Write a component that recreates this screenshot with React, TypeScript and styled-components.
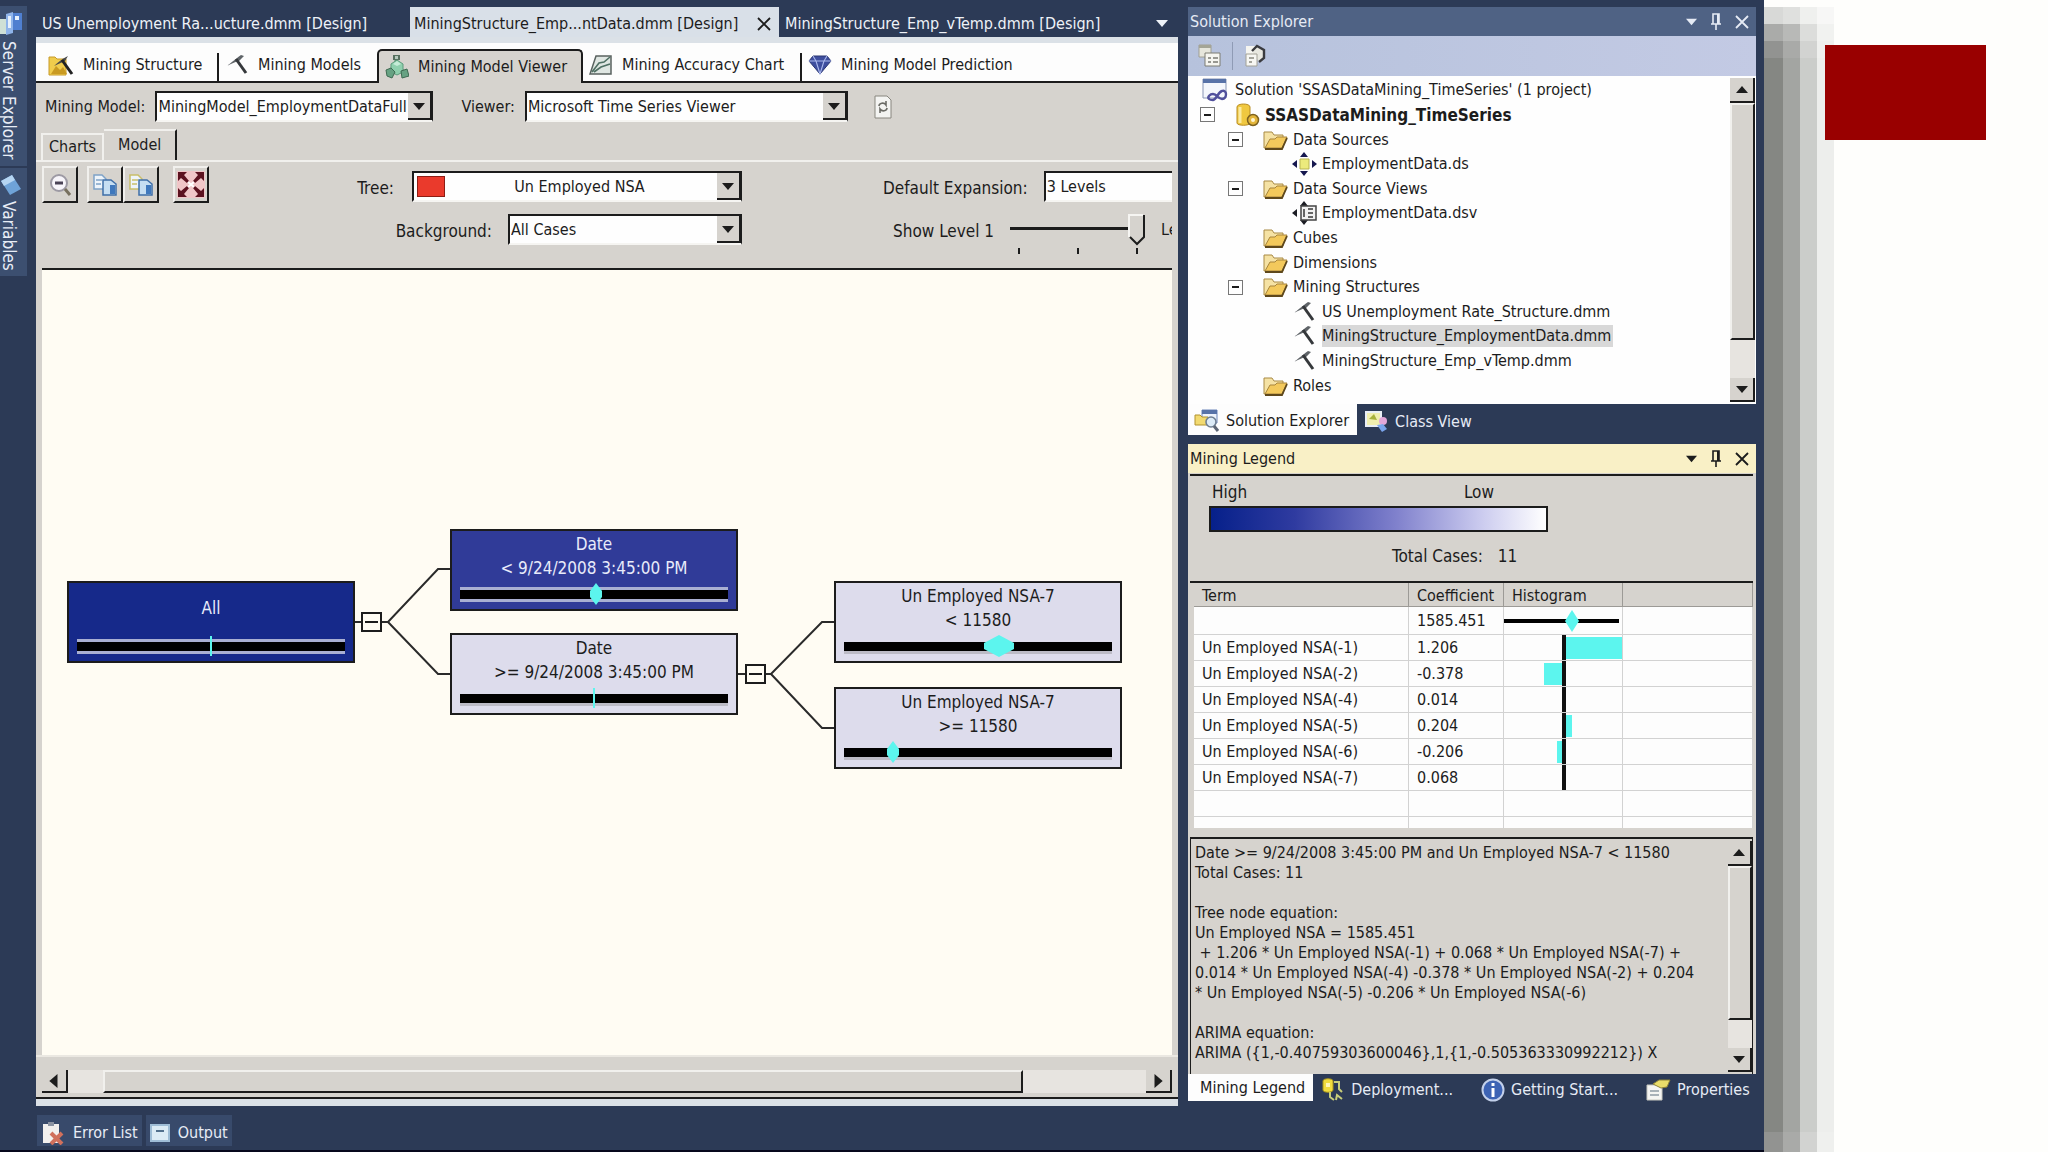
import React from "react";
import styled, { createGlobalStyle, css } from "styled-components";

const navy = "#2c3a56";
const face = "#d6d3ce";
const ink = "#1c1c1c";
const cyan = "#5cf5ee";

const GlobalStyle = createGlobalStyle`
  * { box-sizing: border-box; }
  body {
    margin: 0;
    background: #fefefc;
    color: ${ink};
    font-family: "DejaVu Sans Condensed", "DejaVu Sans", sans-serif;
    font-size: 16px;
    line-height: 20px;
  }
  button, select { font: inherit; color: inherit; }
  button { margin: 0; padding: 0; border: 0; background: none; white-space: nowrap; }
`;

/* ---------- page frame ---------- */

const Page = styled.div`
  display: grid;
  grid-template-columns: minmax(0, 1fr) 284px;
  min-height: 100vh;
`;

const Ide = styled.main`
  display: grid;
  grid-template-columns: 36px minmax(0, 1fr) 568px;
  padding-right: 8px;
  background: ${navy};
  border-bottom: 2px solid #06081c;
`;

const Aside = styled.aside`
  display: grid;
  grid-template-rows: 1fr;
`;

const Shadow = styled.div`
  grid-area: 1 / 1;
  display: grid;
  grid-template-columns: 19px 17px 17px 17px;
`;

const Stripe = styled.div<{ $a: string; $b: string; $c: string; $d: string }>`
  background: linear-gradient(
    to bottom,
    #fefefc 7px,
    ${(p) => p.$a} 7px 24px,
    ${(p) => p.$b} 24px 41px,
    ${(p) => p.$c} 41px 58px,
    ${(p) => p.$d} 58px calc(100% - 20px),
    ${(p) => p.$c} calc(100% - 20px)
  );
`;

const RedBlock = styled.div`
  grid-area: 1 / 1;
  width: 161px;
  height: 95px;
  margin: 45px 0 0 61px;
  background: #990000;
`;

/* ---------- left rail ---------- */

const Rail = styled.nav`
  display: flex;
  flex-direction: column;
  gap: 2px;
  padding-top: 6px;
`;

const RailTab = styled.button`
  display: flex;
  flex-direction: column;
  align-items: flex-start;
  gap: 5px;
  width: 27px;
  padding: 4px 0 6px;
  background: #3c4f70;
  color: #e8edf6;
`;

const RailText = styled.span`
  writing-mode: vertical-rl;
  font-size: 17px;
  line-height: 17px;
`;

/* ---------- document area ---------- */

const Editor = styled.section`
  display: flex;
  flex-direction: column;
  min-width: 0;
  margin-right: 10px;
`;

const DocTabs = styled.div`
  display: flex;
  align-items: stretch;
  height: 37px;
  padding-top: 7px;
  color: #eef2f8;
`;

const DocTab = styled.button<{ $active?: boolean; $width?: number }>`
  display: flex;
  align-items: center;
  justify-content: space-between;
  width: ${(p) => (p.$width ? p.$width + "px" : "auto")};
  padding: 3px 8px 0 6px;
  text-align: left;
  ${(p) => p.$active && css`padding-left: 4px; background: #d9e0e8; color: ${ink};`}
`;

const TabMenu = styled.button`
  margin-left: auto;
  padding: 4px 10px 0;
`;

const Frame = styled.div`
  display: flex;
  flex-direction: column;
  flex: 1;
  min-height: 0;
  border: solid #dbe1e7;
  border-width: 6px 0 7px;
  background: ${face};
`;

const DesignTabs = styled.div`
  display: flex;
  height: 40px;
  padding-top: 6px;
  background: #fdfdfd;
  &::after { content: ""; flex: 1; border-bottom: 2px solid ${ink}; }
`;

const DesignTab = styled.button<{ $width: number; $active?: boolean; $divided?: boolean }>`
  display: flex;
  align-items: center;
  gap: 9px;
  width: ${(p) => p.$width}px;
  padding-left: 6px;
  border-bottom: 2px solid ${ink};
  background: linear-gradient(${ink}, ${ink}) right bottom / ${(p) => (p.$divided ? 2 : 0)}px 28px no-repeat;
  &:first-child { padding-left: 12px; }
  ${(p) =>
    p.$active &&
    css`
      border: solid ${ink};
      border-width: 2px 2px 0;
      border-radius: 5px 5px 0 0;
      background: ${face};
    `}
`;

const ModelRow = styled.div`
  display: flex;
  align-items: center;
  padding: 8px 9px 7px;
`;

const FieldLabel = styled.label<{ $gap?: number }>`
  margin-right: ${(p) => p.$gap ?? 10}px;
  white-space: nowrap;
`;

const Combo = styled.span<{ $width: number }>`
  display: grid;
  grid-template-columns: minmax(0, 1fr) 24px;
  align-items: center;
  flex: none;
  width: ${(p) => p.$width}px;
  height: 31px;
  border: solid ${ink};
  border-width: 2px 1px 0 2px;
  border-bottom: 2px solid #f6f5f2;
  background: #fefefe;
`;

const ComboSelect = styled.select<{ $center?: boolean }>`
  grid-area: 1 / 1 / 2 / 3;
  width: 100%;
  height: 27px;
  padding: 0 24px 0 ${(p) => (p.$center ? 28 : 1)}px;
  border: 0;
  border-radius: 0;
  appearance: none;
  background: transparent;
  text-align: ${(p) => (p.$center ? "center" : "left")};
  text-align-last: ${(p) => (p.$center ? "center" : "left")};
`;

const ComboArrow = styled.span`
  grid-area: 1 / 2;
  display: grid;
  place-items: center;
  height: 27px;
  border: solid ${ink};
  border-width: 0 2px 2px 0;
  background: ${face};
  pointer-events: none;
`;

const Swatch = styled.span`
  grid-area: 1 / 1;
  width: 28px;
  height: 21px;
  margin-left: 3px;
  border: 1px solid #8e1d14;
  background: #ea3a2c;
`;

const ViewerLabel = styled(FieldLabel)`
  margin-left: 28px;
`;

const RefreshButton = styled.button`
  margin-left: 26px;
  line-height: 0;
`;

const ViewTabs = styled.div`
  display: flex;
  align-items: flex-end;
  height: 33px;
  padding-left: 5px;
  border-bottom: 2px solid #f1f0ed;
`;

const ViewTab = styled.button<{ $active?: boolean }>`
  height: ${(p) => (p.$active ? 31 : 27)}px;
  padding: 0 ${(p) => (p.$active ? 14 : 6)}px 1px;
  border: solid #f1f0ed;
  border-width: 2px 2px 0;
  ${(p) => p.$active && css`border-right-color: ${ink}; border-left: 0;`}
`;

const Tools = styled.div`
  display: grid;
  grid-template-columns: 170px 530px minmax(0, 1fr);
  height: 108px;
  margin: 0 6px;
  padding-top: 4px;
  border-bottom: 2px solid ${ink};
  overflow: hidden;
`;

const ToolButtons = styled.div`
  display: flex;
  align-items: flex-start;
`;

const ToolButton = styled.button<{ $gap?: number }>`
  display: grid;
  place-items: center;
  width: 36px;
  height: 37px;
  margin-right: ${(p) => p.$gap ?? 0}px;
  border: 2px solid;
  border-color: #f1f0ed ${ink} ${ink} #f1f0ed;
`;

const FieldColumn = styled.div<{ $end?: boolean }>`
  display: flex;
  flex-direction: column;
  gap: 12px;
  align-items: ${(p) => (p.$end ? "flex-end" : "flex-start")};
  padding: 5px 0 0 ${(p) => (p.$end ? 0 : 141)}px;
`;

const Field = styled.div<{ $indent?: number }>`
  display: flex;
  align-items: center;
  height: 31px;
  padding-left: ${(p) => p.$indent ?? 0}px;
  white-space: nowrap;
  & > label { font-size: 17px; padding-top: 2px; }
`;

const SliderBox = styled.span`
  display: flex;
  flex-direction: column;
  gap: 2px;
  width: 136px;
  padding-top: 8px;
  margin-right: 15px;
`;

const thumbArt =
  "%3Csvg xmlns='http://www.w3.org/2000/svg' width='18' height='32'%3E%3Cpath d='M1 1h16v22l-8 8-8-8z' fill='%23d6d3ce'/%3E%3Cpath d='M16 1v22l-7 7-7-7' fill='none' stroke='%231c1c1c' stroke-width='2'/%3E%3Cpath d='M1 23V1h14' fill='none' stroke='%23f6f5f2' stroke-width='2'/%3E%3C/svg%3E";

const Slider = styled.input`
  width: 100%;
  height: 32px;
  margin: 0;
  appearance: none;
  background: linear-gradient(${ink}, ${ink}) 0 13px / 119px 3px no-repeat;
  &::-webkit-slider-thumb {
    appearance: none;
    width: 18px;
    height: 32px;
    background: url("data:image/svg+xml,${thumbArt}") no-repeat;
  }
`;

const Ticks = styled.span`
  display: flex;
  justify-content: space-between;
  padding: 0 8px;
`;

const Tick = styled.span`
  width: 2px;
  height: 6px;
  background: ${ink};
`;

const Canvas = styled.div`
  position: relative;
  flex: 1;
  min-height: 700px;
  margin: 0 6px;
  background: #fffcf3;
  overflow: hidden;
`;

const Links = styled.svg`
  position: absolute;
  left: 0;
  top: 0;
`;

const Node = styled.div<{ $x: number; $y: number; $tone: "root" | "dark" | "light" }>`
  position: absolute;
  left: ${(p) => p.$x}px;
  top: ${(p) => p.$y}px;
  display: flex;
  flex-direction: column;
  justify-content: space-between;
  width: 288px;
  height: 82px;
  padding: 1px 8px 4px;
  border: 2px solid ${ink};
  background: ${(p) => ({ root: "#16298a", dark: "#303b98", light: "#dddcec" })[p.$tone]};
  color: ${(p) => (p.$tone === "light" ? ink : "#e8ebfa")};
  font-size: 17px;
  line-height: 24px;
  text-align: center;
`;

const NodeText = styled.div<{ $single?: boolean }>`
  padding-top: ${(p) => (p.$single ? 12 : 0)}px;
  white-space: pre-line;
`;

const Expander = styled.button<{ $x: number; $y: number }>`
  position: absolute;
  left: ${(p) => p.$x}px;
  top: ${(p) => p.$y}px;
  display: grid;
  place-items: center;
  width: 21px;
  height: 20px;
  border: 2px solid ${ink};
  background: #fffcf3;
  &::after { content: ""; width: 13px; height: 2px; background: ${ink}; }
`;

const HScroll = styled.div`
  display: grid;
  grid-template-columns: 26px minmax(0, 35fr) minmax(0, 922fr) minmax(0, 123fr) 26px;
  height: 44px;
  padding: 13px 6px 4px;
  border-top: 2px solid #ebe8e2;
  border-bottom: 2px solid ${ink};
`;

const ScrollButton = styled.button`
  display: grid;
  place-items: center;
  min-height: 23px;
  border: solid ${ink};
  border-width: 0 2px 2px 0;
  background: ${face};
`;

const Track = styled.span`
  background: #e7e4e0;
`;

const Thumb = styled.span`
  border: 2px solid;
  border-color: #f1f0ed ${ink} ${ink} #f1f0ed;
  background: ${face};
`;

const StatusTabs = styled.div`
  display: flex;
  gap: 4px;
  height: 44px;
  padding: 9px 0 4px 1px;
`;

const StatusTab = styled.button`
  display: flex;
  align-items: center;
  gap: 8px;
  padding: 4px 4px 0;
  background: #384a6b;
  color: #e8edf6;
`;

/* ---------- docked panels ---------- */

const Docks = styled.div`
  display: flex;
  flex-direction: column;
  padding-top: 7px;
`;

const PanelHeader = styled.header<{ $active?: boolean }>`
  display: flex;
  align-items: center;
  gap: 13px;
  height: 29px;
  padding: 0 7px 0 2px;
  background: ${(p) => (p.$active ? "#f9f0c6" : "#4f6284")};
  color: ${(p) => (p.$active ? ink : "#e6ebf5")};
`;

const PanelTitle = styled.h2`
  flex: 1;
  margin: 0;
  font-size: 16px;
  font-weight: 400;
`;

const IconButton = styled.button`
  line-height: 0;
`;

const PanelToolbar = styled.div`
  display: flex;
  align-items: center;
  gap: 10px;
  height: 40px;
  padding-left: 10px;
  background: linear-gradient(to right, #b6c2dc, #c3cae4);
`;

const Separator = styled.span`
  width: 1px;
  height: 28px;
  background: #8f9bb5;
`;

const TreePanel = styled.div`
  display: grid;
  grid-template-columns: minmax(0, 1fr) 25px;
  height: 328px;
  padding-right: 1px;
  background: #fefefe;
`;

const Tree = styled.ul`
  display: grid;
  grid-template-rows: repeat(13, 1fr);
  margin: 0;
  padding: 2px 0 6px;
  list-style: none;
`;

const TreeItem = styled.li<{ $level: number; $bold?: boolean }>`
  display: grid;
  grid-template-columns: 32px 27px auto;
  align-items: center;
  justify-content: start;
  gap: 3px;
  padding-left: ${(p) => [0, 12, 40, 69][p.$level]}px;
  white-space: nowrap;
  ${(p) => p.$bold && css`font-size: 17px; font-weight: 700;`}
  ${(p) => p.$level === 0 && css`grid-template-columns: 12px 31px auto; gap: 2px;`}
`;

const TreeToggle = styled.button`
  display: grid;
  place-items: center;
  width: 15px;
  height: 15px;
  border: 1px solid #777;
  background: #fefefe;
  &::after { content: ""; width: 7px; height: 2px; background: ${ink}; }
`;

const TreeLabel = styled.span<{ $selected?: boolean }>`
  padding: 1px 2px 1px 0;
  background: ${(p) => (p.$selected ? "#d8d8d8" : "transparent")};
`;

const VScroll = styled.div<{ $thumb: number; $rest: number }>`
  display: grid;
  grid-template-rows: 25px minmax(0, ${(p) => p.$thumb}fr) minmax(0, ${(p) => p.$rest}fr) 24px;
  padding: 2px 0;
`;

const DockTabs = styled.div`
  display: flex;
  gap: 8px;
`;

const DockTab = styled.button<{ $active?: boolean; $tall?: boolean }>`
  display: flex;
  align-items: center;
  gap: 6px;
  height: ${(p) => (p.$tall ? 31 : 27)}px;
  padding: 5px 20px 1px 0;
  color: #e6ebf5;
  ${(p) => p.$active && css`padding: 4px 8px 2px 6px; background: #fdfdfd; color: ${ink};`}
  ${(p) => p.$active && !p.$tall && css`padding: 2px 8px 2px 12px;`}
`;

const LegendPanel = styled.section`
  margin-top: 9px;
`;

const LegendBody = styled.div`
  padding: 1px 3px 0 2px;
  background: ${face};
`;

const Scale = styled.div`
  height: 109px;
  padding: 6px 19px 0;
  border: solid ${ink};
  border-width: 2px 0;
  font-size: 17px;
`;

const ScaleEnds = styled.div`
  display: flex;
  justify-content: space-between;
  width: 285px;
  padding-left: 3px;
`;

const ScaleBar = styled.div`
  width: 339px;
  height: 26px;
  margin-top: 4px;
  border: 2px solid ${ink};
  background: linear-gradient(to right, #06208a, #2f3ba0 25%, #7f80cc 55%, #c9c9ee 80%, #fff);
`;

const Total = styled.div`
  display: flex;
  gap: 15px;
  padding: 14px 0 0 183px;
`;

const TableBox = styled.div`
  height: 245px;
  margin-left: 4px;
  background: #fdfdfd;
  overflow: hidden;
`;

const Table = styled.table`
  width: 100%;
  table-layout: fixed;
  border-collapse: separate;
  border-spacing: 0;
`;

const Th = styled.th<{ $width?: number }>`
  width: ${(p) => (p.$width ? p.$width + "px" : "auto")};
  height: 24px;
  padding: 2px 8px 0;
  border: solid #9c9a96;
  border-width: 0 1px 1px 0;
  background: ${face};
  font-weight: 400;
  text-align: left;
`;

const Td = styled.td<{ $tall?: boolean; $plot?: boolean }>`
  height: ${(p) => (p.$tall ? 28 : 26)}px;
  padding: 0 ${(p) => (p.$plot ? 0 : 8)}px;
  border: solid #d2d2d2;
  border-width: 0 1px 1px 0;
  line-height: 0;
  white-space: nowrap;
`;

const Equation = styled.div`
  display: grid;
  grid-template-columns: minmax(0, 1fr) 24px;
  height: 237px;
  margin-top: 9px;
  border: solid ${ink};
  border-width: 2px 1px 0;
`;

const EquationText = styled.div`
  padding: 4px 0 0 4px;
  white-space: pre;
  overflow: hidden;
`;

/* ---------- drawings ---------- */

const Triangle = ({ dir = "down", size = 12 }: { dir?: "down" | "up" | "left" | "right"; size?: number }) => {
  const d = { down: "M0 3h12L6 10z", up: "M0 9h12L6 2z", left: "M9 0v12L2 6z", right: "M3 0v12l7-6z" }[dir];
  return (
    <svg width={size} height={size} viewBox="0 0 12 12" aria-hidden="true">
      <path d={d} fill="currentColor" />
    </svg>
  );
};

const Cross = ({ size = 14 }: { size?: number }) => (
  <svg width={size} height={size} viewBox="0 0 14 14" aria-hidden="true">
    <path d="M1 1l12 12M13 1L1 13" stroke="currentColor" strokeWidth="1.8" />
  </svg>
);

const Pin = () => (
  <svg width="12" height="18" viewBox="0 0 12 18" aria-hidden="true">
    <path d="M3 1h6v10H3zM1 11h10M6 11v6" fill="none" stroke="currentColor" strokeWidth="1.6" />
    <path d="M7 1h2v10H7z" fill="currentColor" />
  </svg>
);

const Pick = () => (
  <svg width="24" height="22" viewBox="0 0 24 22" aria-hidden="true">
    <path d="M2 12C6 9 9 6 16 1l3 1-5 5C9 8 6 10 2 12z" fill="#5f6468" />
    <path d="M11 5l10 14" stroke="#35383b" strokeWidth="3" />
  </svg>
);

const StructureIcon = () => (
  <svg width="26" height="22" viewBox="0 0 26 22" aria-hidden="true">
    <path d="M1 3h6l2 2h9v16H1z" fill="#f0cc4c" stroke="#c79a2a" />
    <path d="M3 20l5-8 4 4 3-3 4 7z" fill="#c99a22" />
    <path d="M6 12C10 8 14 5 20 2l-3 5z" fill="#4a4a4a" />
    <path d="M14 6l10 14" stroke="#222" strokeWidth="3" />
  </svg>
);

const ViewerIcon = () => (
  <svg width="24" height="24" viewBox="0 0 24 24" aria-hidden="true">
    <path d="M11 5v5M8 13l-3 4M15 13l4 4" stroke="#5b8a72" strokeWidth="3" />
    <path d="M8 0h7v5H8z" fill="#57705f" />
    <path d="M10 1h3v3h-3z" fill="#b5c9bd" />
    <path d="M12 5l6 4v8l-6 3-6-3V9z" fill="#8fd0ae" stroke="#5d9c7c" />
    <path d="M12 6l4 3-4 2-4-2z" fill="#c5ecd7" />
    <path d="M1 15l5-2 4 4-3 6-5-2zM16 16l6-2 2 7-7 2z" fill="#67a283" stroke="#3e6a52" />
  </svg>
);

const ChartIcon = () => (
  <svg width="24" height="22" viewBox="0 0 24 22" aria-hidden="true">
    <path d="M7 2h15v18H1z" fill="#dfe6e2" stroke="#59625f" strokeWidth="1.5" />
    <path d="M3 18l7-9 5-1 6-5M5 18l7-5 9-3" fill="none" stroke="#4f6f63" strokeWidth="1.6" />
  </svg>
);

const DiamondIcon = () => (
  <svg width="24" height="20" viewBox="0 0 24 20" aria-hidden="true">
    <path d="M5 1h14l4 5-11 13L1 6z" fill="#3e4e9e" stroke="#2a3672" />
    <path d="M5 1l3 5h8l3-5M1 6h22M8 6l4 13 4-13" fill="none" stroke="#aab8ec" strokeWidth="1.1" />
  </svg>
);

const RefreshIcon = () => (
  <svg width="18" height="24" viewBox="0 0 18 24" aria-hidden="true">
    <path d="M1 1h12l4 4v18H1z" fill="#f4f4f2" stroke="#88867f" />
    <path d="M5 11c0-3 5-4 7-1V6M13 13c0 3-5 4-7 1v4" fill="none" stroke="#6b6b66" strokeWidth="1.6" />
  </svg>
);

const ZoomOutIcon = () => (
  <svg width="24" height="24" viewBox="0 0 24 24" aria-hidden="true">
    <circle cx="11" cy="10" r="8" fill="#f7f5fa" stroke="#9d9aa4" strokeWidth="2" />
    <path d="M7 10h8" stroke="#4a4356" strokeWidth="3" />
    <path d="M17 16l5 6" stroke="#77705f" strokeWidth="3" />
  </svg>
);

const CopyIcon = ({ tint }: { tint: string }) => (
  <svg width="26" height="24" viewBox="0 0 26 24" aria-hidden="true">
    <path d="M2 2h8l4 4v10H2z" fill="#eef4fa" stroke={tint} strokeWidth="1.5" />
    <path d="M4 7h6M4 11h5" stroke={tint} strokeWidth="1.4" />
    <path d="M11 7h8l5 4v11H11z" fill="#c6def2" stroke="#3f6fa8" strokeWidth="1.5" />
    <path d="M18 12h5v9h-5z" fill="#3f78bd" />
  </svg>
);

const FitIcon = () => (
  <svg width="28" height="27" viewBox="0 0 28 27" aria-hidden="true">
    <rect width="28" height="27" fill="#f0c6c8" />
    <path
      d="M1 1h9L7 4l5 6-2 2-6-5-3 3zM27 1h-9l3 3-5 6 2 2 6-5 3 3zM1 26h9l-3-3 5-6-2-2-6 5-3-3zM27 26h-9l3-3-5-6 2-2 6 5 3-3z"
      fill="#5c1220"
    />
    <path d="M11 11l6 5M17 11l-6 5" stroke="#fff" strokeWidth="2" />
  </svg>
);

const ServerIcon = () => (
  <svg width="23" height="26" viewBox="0 0 23 26" aria-hidden="true">
    <path d="M0 9h7v15H0z" fill="#cfe0d6" />
    <path d="M6 4l7-2v21l-7 2z" fill="#8fb4ea" />
    <path d="M13 3h9v17h-9z" fill="#4f7fd0" />
    <path d="M8 6h3v12H8zM15 6h4v4h-4z" fill="#e6f0fc" />
  </svg>
);

const VariablesIcon = () => (
  <svg width="22" height="24" viewBox="0 0 22 24" aria-hidden="true">
    <path d="M1 9L12 3l9 14-11 6z" fill="#6fa3d8" />
    <path d="M1 9L12 3l3 5L4 14z" fill="#b5d5f2" />
  </svg>
);

const FolderIcon = () => (
  <svg width="25" height="20" viewBox="0 0 25 20" aria-hidden="true">
    <path d="M1 2h8l2 3h9v13H1z" fill="#f5e2a4" stroke="#a98a45" />
    <path d="M7 9h5l2-2h10l-5 11H2z" fill="#f3c95c" stroke="#a8853c" />
    <path d="M2 19h17l5-11" fill="none" stroke="#5e481c" strokeWidth="1.8" />
  </svg>
);

const SolutionIcon = () => (
  <svg width="26" height="24" viewBox="0 0 26 24" aria-hidden="true">
    <path d="M1 1h23v19H1z" fill="#f4f7fc" stroke="#8795b5" />
    <path d="M1 1h23v4H1z" fill="#5873a8" />
    <path d="M7 21c-2-2 1-5 4-5 4 0 5 5 9 5 3 0 4-3 4-5s-2-4-4-3c-4 1-5 8-9 9-2 0-3 0-4-1z" fill="none" stroke="#50509c" strokeWidth="2.4" />
  </svg>
);

const ProjectIcon = () => (
  <svg width="25" height="24" viewBox="0 0 25 24" aria-hidden="true">
    <path d="M2 4c0-4 13-4 13 0v16c0 3-13 3-13 0z" fill="#f0c840" stroke="#b98d23" />
    <path d="M5 4v16" stroke="#fbeaa0" strokeWidth="3" />
    <circle cx="18" cy="17" r="5.5" fill="#e3b53a" stroke="#7d6220" strokeWidth="1.5" />
    <circle cx="18" cy="17" r="2" fill="#fff5cf" />
  </svg>
);

const DataSourceIcon = () => (
  <svg width="25" height="24" viewBox="0 0 25 24" aria-hidden="true">
    <path d="M12 0l4 5H8zM12 24l4-5H8zM0 12l5-4v8zM25 12l-5-4v8z" fill="#16184f" />
    <path d="M8 7h9v10H8z" fill="#ecea7c" stroke="#b8b552" />
  </svg>
);

const DataViewIcon = () => (
  <svg width="26" height="24" viewBox="0 0 26 24" aria-hidden="true">
    <path d="M12 0l4 5H8zM12 24l4-5H8zM0 12l5-4v8z" fill="#1c1d24" />
    <path d="M9 5h15v14H9z" fill="#f2f2f2" stroke="#444" strokeWidth="1.5" />
    <path d="M12 8v8M16 8h5M16 12h5M16 16h5" stroke="#666" strokeWidth="2" />
  </svg>
);

const PropertiesIcon = () => (
  <svg width="25" height="22" viewBox="0 0 25 22" aria-hidden="true">
    <path d="M1 6h15v15H1z" fill="#f4f4f2" stroke="#c8c8c0" />
    <path d="M4 12h9M4 16h9" stroke="#8f9aa5" strokeWidth="1.6" />
    <path d="M7 5l6-4h11l-3 7-6 1z" fill="#e9dc6a" stroke="#8d8238" />
  </svg>
);

const ClassIcon = () => (
  <svg width="24" height="22" viewBox="0 0 24 22" aria-hidden="true">
    <path d="M1 1h15v14H1z" fill="#f1efb0" stroke="#e9eef7" strokeWidth="2" />
    <path d="M4 8l5-5 3 6z" fill="#a8b23c" />
    <circle cx="18" cy="10" r="4" fill="#e2a7da" />
    <path d="M12 14l6-1 4 5-5 3z" fill="#7aa4ec" />
  </svg>
);

const ExplorerIcon = () => (
  <svg width="26" height="24" viewBox="0 0 26 24" aria-hidden="true">
    <path d="M8 1h15v13H8z" fill="#eef3fb" stroke="#6c86bb" />
    <path d="M8 1h15v4H8z" fill="#5873a8" />
    <path d="M1 6h5l2 2h6v8H1z" fill="#f2da70" stroke="#b1922f" />
    <circle cx="17" cy="13" r="5" fill="#dcebf7" stroke="#6f7f92" strokeWidth="1.6" />
    <path d="M20 17l4 5" stroke="#5d6675" strokeWidth="3" />
  </svg>
);

const DeployIcon = () => (
  <svg width="24" height="24" viewBox="0 0 24 24" aria-hidden="true">
    <path d="M2 3c0-3 10-3 10 0v9c0 3-10 3-10 0z" fill="#f1dc3e" stroke="#a9941c" />
    <path d="M5 5h4v4H5z" fill="#fff7b8" />
    <path d="M13 4h5v7l3 3M9 14v5l4 3M15 22l1-5 5 4" fill="none" stroke="#c8ce7a" strokeWidth="2" />
  </svg>
);

const InfoIcon = () => (
  <svg width="24" height="24" viewBox="0 0 24 24" aria-hidden="true">
    <circle cx="12" cy="12" r="10.5" fill="#3d63b4" stroke="#c3d0ea" strokeWidth="2" />
    <path d="M12 5v3M12 10v9" stroke="#fff" strokeWidth="3" />
  </svg>
);

const ErrorIcon = () => (
  <svg width="24" height="24" viewBox="0 0 24 24" aria-hidden="true">
    <path d="M2 3h16v19H2z" fill="#f2f0ee" />
    <path d="M7 1h6v4H7z" fill="#8b93a2" />
    <path d="M10 12l11 11M21 12L10 23" stroke="#d0705c" strokeWidth="4" />
  </svg>
);

const OutputIcon = () => (
  <svg width="20" height="18" viewBox="0 0 20 18" aria-hidden="true">
    <path d="M1 1h18v16H1z" fill="#dcebf5" stroke="#9fbdd6" strokeWidth="2" />
    <path d="M6 7h8" stroke="#52708d" strokeWidth="2" />
  </svg>
);

const SheetIcon = ({ dark }: { dark?: boolean }) => (
  <svg width="24" height="24" viewBox="0 0 24 24" aria-hidden="true">
    {dark ? (
      <>
        <path d="M3 2h9v9H3z" fill="#f5f5f0" />
        <path d="M9 7l5-5 7 4v8l-5 4" fill="#e8e8e0" stroke="#3a3b3f" strokeWidth="2.4" />
        <path d="M3 10h11v12H3z" fill="#f7f7f3" stroke="#a2a196" />
        <path d="M6 14h5M6 18h3" stroke="#8a8a80" strokeWidth="1.6" />
      </>
    ) : (
      <>
        <path d="M1 1h12v12H1z" fill="#e6e6dc" stroke="#a09f92" />
        <path d="M1 1h12v3H1z" fill="#a4a596" />
        <path d="M7 9h15v13H7z" fill="#f5f5f0" stroke="#7d7c72" />
        <path d="M10 14h3M15 14h5M10 18h3M15 18h5" stroke="#7a7a72" strokeWidth="1.6" />
      </>
    )}
  </svg>
);

/* ---------- data ---------- */

type Mark = { at: number; half: number };

const Gauge = ({ mark, light }: { mark: Mark; light?: boolean }) => (
  <svg width="268" height="22" viewBox="0 0 268 22" aria-hidden="true">
    <rect y="4" width="268" height="15" fill={light ? "#bcbbc6" : "#a9afd2"} />
    {light && <rect y="4" width="268" height="3" fill="#dddcec" />}
    <rect y="7" width="268" height="9" fill="#000" />
    {mark.half < 2 ? (
      <path d={`M${mark.at} 1v20`} stroke={cyan} strokeWidth="2" />
    ) : (
      <path d={`M${mark.at - mark.half} 8L${mark.at} 0l${mark.half} 8v6l${-mark.half} 8l${-mark.half} -8z`} fill={cyan} />
    )}
  </svg>
);

const nodes = [
  { x: 25, y: 311, tone: "root" as const, text: "All", mark: { at: 134, half: 1 } },
  { x: 408, y: 259, tone: "dark" as const, text: "Date\n< 9/24/2008 3:45:00 PM", mark: { at: 136, half: 6 } },
  { x: 408, y: 363, tone: "light" as const, text: "Date\n>= 9/24/2008 3:45:00 PM", mark: { at: 134, half: 1 } },
  { x: 792, y: 311, tone: "light" as const, text: "Un Employed NSA-7\n< 11580", mark: { at: 155, half: 15 } },
  { x: 792, y: 417, tone: "light" as const, text: "Un Employed NSA-7\n>= 11580", mark: { at: 49, half: 6 } },
];

const treeItems = [
  { level: 0, icon: <SolutionIcon />, text: "Solution 'SSASDataMining_TimeSeries' (1 project)" },
  { level: 1, icon: <ProjectIcon />, text: "SSASDataMining_TimeSeries", open: true, bold: true },
  { level: 2, icon: <FolderIcon />, text: "Data Sources", open: true },
  { level: 3, icon: <DataSourceIcon />, text: "EmploymentData.ds" },
  { level: 2, icon: <FolderIcon />, text: "Data Source Views", open: true },
  { level: 3, icon: <DataViewIcon />, text: "EmploymentData.dsv" },
  { level: 2, icon: <FolderIcon />, text: "Cubes" },
  { level: 2, icon: <FolderIcon />, text: "Dimensions" },
  { level: 2, icon: <FolderIcon />, text: "Mining Structures", open: true },
  { level: 3, icon: <Pick />, text: "US Unemployment Rate_Structure.dmm" },
  { level: 3, icon: <Pick />, text: "MiningStructure_EmploymentData.dmm", selected: true },
  { level: 3, icon: <Pick />, text: "MiningStructure_Emp_vTemp.dmm" },
  { level: 2, icon: <FolderIcon />, text: "Roles" },
];

const terms = [
  { term: "Un Employed NSA(-1)", value: "1.206", bar: 57 },
  { term: "Un Employed NSA(-2)", value: "-0.378", bar: -18 },
  { term: "Un Employed NSA(-4)", value: "0.014", bar: 0 },
  { term: "Un Employed NSA(-5)", value: "0.204", bar: 6 },
  { term: "Un Employed NSA(-6)", value: "-0.206", bar: -5 },
  { term: "Un Employed NSA(-7)", value: "0.068", bar: 0 },
];

const equation = `Date >= 9/24/2008 3:45:00 PM and Un Employed NSA-7 < 11580
Total Cases: 11

Tree node equation:
Un Employed NSA = 1585.451
 + 1.206 * Un Employed NSA(-1) + 0.068 * Un Employed NSA(-7) +
0.014 * Un Employed NSA(-4) -0.378 * Un Employed NSA(-2) + 0.204
* Un Employed NSA(-5) -0.206 * Un Employed NSA(-6)

ARIMA equation:
ARIMA ({1,-0.40759303600046},1,{1,-0.505363330992212}) X`;

const ComboBox = ({ id, width, value, center, swatch }: { id: string; width: number; value: string; center?: boolean; swatch?: boolean }) => (
  <Combo $width={width}>
    {swatch && <Swatch />}
    <ComboSelect id={id} $center={center} defaultValue={value}>
      <option>{value}</option>
    </ComboSelect>
    <ComboArrow>
      <Triangle />
    </ComboArrow>
  </Combo>
);

const VerticalScroll = ({ thumb, rest }: { thumb: number; rest: number }) => (
  <VScroll $thumb={thumb} $rest={rest}>
    <ScrollButton aria-label="Scroll up"><Triangle dir="up" /></ScrollButton>
    <Thumb />
    <Track />
    <ScrollButton aria-label="Scroll down"><Triangle /></ScrollButton>
  </VScroll>
);

const Header = ({ title, active }: { title: string; active?: boolean }) => (
  <PanelHeader $active={active}>
    <PanelTitle>{title}</PanelTitle>
    <IconButton aria-label="Window position"><Triangle size={11} /></IconButton>
    <IconButton aria-label="Auto hide"><Pin /></IconButton>
    <IconButton aria-label="Close"><Cross /></IconButton>
  </PanelHeader>
);

export default function App() {
  return (
    <Page>
      <GlobalStyle />
      <Ide>
        <Rail>
          <RailTab><ServerIcon /><RailText>Server Explorer</RailText></RailTab>
          <RailTab><VariablesIcon /><RailText>Variables</RailText></RailTab>
        </Rail>

        <Editor>
          <DocTabs>
            <DocTab $width={374}>US Unemployment Ra...ucture.dmm [Design]</DocTab>
            <DocTab $active $width={369}>
              MiningStructure_Emp...ntData.dmm [Design]
              <Cross />
            </DocTab>
            <DocTab>MiningStructure_Emp_vTemp.dmm [Design]</DocTab>
            <TabMenu aria-label="Open documents"><Triangle /></TabMenu>
          </DocTabs>

          <Frame>
            <DesignTabs>
              <DesignTab $width={183} $divided><StructureIcon />Mining Structure</DesignTab>
              <DesignTab $width={158}><Pick />Mining Models</DesignTab>
              <DesignTab $width={206} $active><ViewerIcon />Mining Model Viewer</DesignTab>
              <DesignTab $width={219} $divided><ChartIcon />Mining Accuracy Chart</DesignTab>
              <DesignTab $width={220}><DiamondIcon />Mining Model Prediction</DesignTab>
            </DesignTabs>

            <ModelRow>
              <FieldLabel htmlFor="model">Mining Model:</FieldLabel>
              <ComboBox id="model" width={278} value="MiningModel_EmploymentDataFull" />
              <ViewerLabel htmlFor="viewer">Viewer:</ViewerLabel>
              <ComboBox id="viewer" width={323} value="Microsoft Time Series Viewer" />
              <RefreshButton aria-label="Refresh"><RefreshIcon /></RefreshButton>
            </ModelRow>

            <ViewTabs>
              <ViewTab>Charts</ViewTab>
              <ViewTab $active>Model</ViewTab>
            </ViewTabs>

            <Tools>
              <ToolButtons>
                <ToolButton $gap={9} aria-label="Zoom out"><ZoomOutIcon /></ToolButton>
                <ToolButton aria-label="Copy graph"><CopyIcon tint="#7fa3c8" /></ToolButton>
                <ToolButton $gap={14} aria-label="Copy entire graph"><CopyIcon tint="#c9be6a" /></ToolButton>
                <ToolButton aria-label="Size to fit"><FitIcon /></ToolButton>
              </ToolButtons>
              <FieldColumn $end>
                <Field>
                  <FieldLabel htmlFor="tree" $gap={18}>Tree:</FieldLabel>
                  <ComboBox id="tree" width={330} value="Un Employed NSA" center swatch />
                </Field>
                <Field>
                  <FieldLabel htmlFor="background" $gap={16}>Background:</FieldLabel>
                  <ComboBox id="background" width={234} value="All Cases" />
                </Field>
              </FieldColumn>
              <FieldColumn>
                <Field>
                  <FieldLabel htmlFor="expansion" $gap={16}>Default Expansion:</FieldLabel>
                  <ComboBox id="expansion" width={170} value="3 Levels" />
                </Field>
                <Field $indent={10}>
                  <FieldLabel htmlFor="level" $gap={16}>Show Level 1</FieldLabel>
                  <SliderBox>
                    <Slider id="level" type="range" min={1} max={3} defaultValue={3} />
                    <Ticks><Tick /><Tick /><Tick /></Ticks>
                  </SliderBox>
                  Level 3
                </Field>
              </FieldColumn>
            </Tools>

            <Canvas>
              <Links width="1130" height="700" fill="none" stroke="#2a2a2a" strokeWidth="2" aria-hidden="true">
                <path d="M313 352h33l50-53h12M346 352l50 52h12" />
                <path d="M696 404h33l51-52h12M729 404l51 54h12" />
              </Links>
              {nodes.map((n) => (
                <Node key={n.x + "-" + n.y} $x={n.x} $y={n.y} $tone={n.tone}>
                  <NodeText $single={n.tone === "root"}>{n.text}</NodeText>
                  <Gauge mark={n.mark} light={n.tone === "light"} />
                </Node>
              ))}
              <Expander $x={319} $y={342} aria-label="Collapse All" />
              <Expander $x={703} $y={394} aria-label="Collapse Date" />
            </Canvas>

            <HScroll>
              <ScrollButton aria-label="Scroll left"><Triangle dir="left" size={14} /></ScrollButton>
              <Track />
              <Thumb />
              <Track />
              <ScrollButton aria-label="Scroll right"><Triangle dir="right" size={14} /></ScrollButton>
            </HScroll>
          </Frame>

          <StatusTabs>
            <StatusTab><ErrorIcon />Error List</StatusTab>
            <StatusTab><OutputIcon />Output</StatusTab>
          </StatusTabs>
        </Editor>

        <Docks>
          <section>
            <Header title="Solution Explorer" />
            <PanelToolbar>
              <IconButton aria-label="Properties"><SheetIcon /></IconButton>
              <Separator />
              <IconButton aria-label="Refresh tree"><SheetIcon dark /></IconButton>
            </PanelToolbar>
            <TreePanel>
              <Tree>
                {treeItems.map((t) => (
                  <TreeItem key={t.text} $level={t.level} $bold={t.bold}>
                    {t.open ? <TreeToggle aria-label={"Collapse " + t.text} /> : <span />}
                    {t.icon}
                    <TreeLabel $selected={t.selected}>{t.text}</TreeLabel>
                  </TreeItem>
                ))}
              </Tree>
              <VerticalScroll thumb={238} rest={38} />
            </TreePanel>
            <DockTabs>
              <DockTab $active $tall><ExplorerIcon />Solution Explorer</DockTab>
              <DockTab $tall><ClassIcon />Class View</DockTab>
            </DockTabs>
          </section>

          <LegendPanel>
            <Header title="Mining Legend" active />
            <LegendBody>
              <Scale>
                <ScaleEnds><span>High</span><span>Low</span></ScaleEnds>
                <ScaleBar />
                <Total><span>Total Cases:</span><span>11</span></Total>
              </Scale>
              <TableBox>
                <Table>
                  <thead>
                    <tr>
                      <Th $width={215}>Term</Th>
                      <Th $width={95}>Coefficient</Th>
                      <Th $width={119}>Histogram</Th>
                      <Th />
                    </tr>
                  </thead>
                  <tbody>
                    <tr>
                      <Td $tall />
                      <Td $tall>1585.451</Td>
                      <Td $tall $plot>
                        <svg width="118" height="26" aria-hidden="true">
                          <path d="M0 13h115" stroke="#000" strokeWidth="4" />
                          <path d="M68 2l7 11-7 11-7-11z" fill={cyan} />
                        </svg>
                      </Td>
                      <Td $tall />
                    </tr>
                    {terms.map((t) => (
                      <tr key={t.term}>
                        <Td>{t.term}</Td>
                        <Td>{t.value}</Td>
                        <Td $plot>
                          <svg width="118" height="25" aria-hidden="true">
                            <rect x={t.bar < 0 ? 58 + t.bar : 62} y="2" width={Math.abs(t.bar)} height="22" fill={cyan} />
                            <rect x="58" width="4" height="25" fill="#111" />
                          </svg>
                        </Td>
                        <Td />
                      </tr>
                    ))}
                    {[0, 1].map((i) => (
                      <tr key={i}><Td /><Td /><Td /><Td /></tr>
                    ))}
                  </tbody>
                </Table>
              </TableBox>
              <Equation>
                <EquationText>{equation}</EquationText>
                <VerticalScroll thumb={155} rest={28} />
              </Equation>
            </LegendBody>
            <DockTabs>
              <DockTab $active>Mining Legend</DockTab>
              <DockTab><DeployIcon />Deployment...</DockTab>
              <DockTab><InfoIcon />Getting Start...</DockTab>
              <DockTab><PropertiesIcon />Properties</DockTab>
            </DockTabs>
          </LegendPanel>
        </Docks>
      </Ide>

      <Aside>
        <Shadow>
          <Stripe $a="#d8d9d7" $b="#aaaba9" $c="#929391" $d="#858783" />
          <Stripe $a="#dfe0de" $b="#b8b9b7" $c="#a9aaa8" $d="#a3a5a2" />
          <Stripe $a="#eff0ee" $b="#dcdddb" $c="#d2d3d1" $d="#cbcdca" />
          <Stripe $a="#f7f7f6" $b="#f1f2f0" $c="#eff0ee" $d="#edeeec" />
        </Shadow>
        <RedBlock />
      </Aside>
    </Page>
  );
}
